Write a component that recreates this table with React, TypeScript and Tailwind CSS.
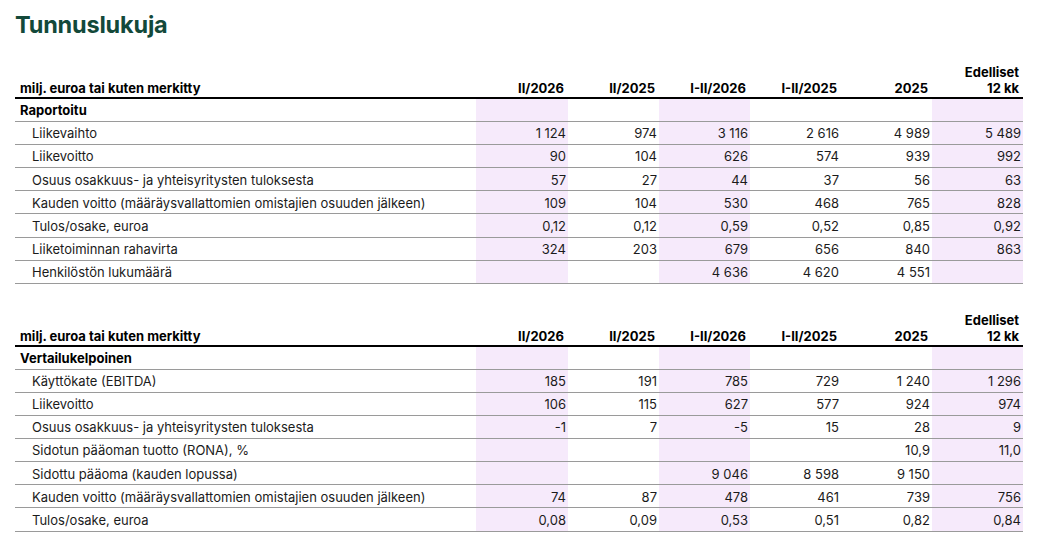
import React from "react";

type Row = { label: string; values: string[]; section?: boolean };

const cols = ["II/2026", "II/2025", "I-II/2026", "I-II/2025", "2025"];

const table1: Row[] = [
  { label: "Raportoitu", values: ["", "", "", "", "", ""], section: true },
  { label: "Liikevaihto", values: ["1 124", "974", "3 116", "2 616", "4 989", "5 489"] },
  { label: "Liikevoitto", values: ["90", "104", "626", "574", "939", "992"] },
  { label: "Osuus osakkuus- ja yhteisyritysten tuloksesta", values: ["57", "27", "44", "37", "56", "63"] },
  { label: "Kauden voitto (määräysvallattomien omistajien osuuden jälkeen)", values: ["109", "104", "530", "468", "765", "828"] },
  { label: "Tulos/osake, euroa", values: ["0,12", "0,12", "0,59", "0,52", "0,85", "0,92"] },
  { label: "Liiketoiminnan rahavirta", values: ["324", "203", "679", "656", "840", "863"] },
  { label: "Henkilöstön lukumäärä", values: ["", "", "4 636", "4 620", "4 551", ""] },
];

const table2: Row[] = [
  { label: "Vertailukelpoinen", values: ["", "", "", "", "", ""], section: true },
  { label: "Käyttökate (EBITDA)", values: ["185", "191", "785", "729", "1 240", "1 296"] },
  { label: "Liikevoitto", values: ["106", "115", "627", "577", "924", "974"] },
  { label: "Osuus osakkuus- ja yhteisyritysten tuloksesta", values: ["-1", "7", "-5", "15", "28", "9"] },
  { label: "Sidotun pääoman tuotto (RONA), %", values: ["", "", "", "", "10,9", "11,0"] },
  { label: "Sidottu pääoma (kauden lopussa)", values: ["", "", "9 046", "8 598", "9 150", ""] },
  { label: "Kauden voitto (määräysvallattomien omistajien osuuden jälkeen)", values: ["74", "87", "478", "461", "739", "756"] },
  { label: "Tulos/osake, euroa", values: ["0,08", "0,09", "0,53", "0,51", "0,82", "0,84"] },
];

const shaded = [true, false, true, false, false, true];

function Table({ rows, className }: { rows: Row[]; className: string }) {
  return (
    <div className={className}>
      <div className="grid grid-cols-[461px_92px_91px_91px_91px_91px_91px] h-[37px] border-b-2 border-black items-end font-bold text-[13px] leading-[16px] text-black">
        <div className="pl-[5px] pb-[1px]">milj. euroa tai kuten merkitty</div>
        {cols.map((c) => (
          <div key={c} className="text-right pr-[4px] pb-[1px]">
            {c}
          </div>
        ))}
        <div className="text-right pr-[4px] pb-[1px]">
          Edelliset
          <br />
          12 kk
        </div>
      </div>
      {rows.map((r, i) => (
        <div
          key={i}
          className="grid grid-cols-[461px_92px_91px_91px_91px_91px_91px] h-[23.1px] border-b border-[#9a9a9a] text-[13px] text-[#1b1b1b]"
        >
          <div
            className={
              r.section
                ? "pl-[5px] pt-[2px] flex items-center font-bold text-black"
                : "pl-[17px] pt-[2px] flex items-center"
            }
          >
            {r.label}
          </div>
          {r.values.map((v, j) => (
            <div
              key={j}
              className={
                shaded[j]
                  ? "bg-[#f6eafb] flex items-center justify-end pr-[2px] pt-[2px]"
                  : "flex items-center justify-end pr-[2px] pt-[2px]"
              }
            >
              {v}
            </div>
          ))}
        </div>
      ))}
    </div>
  );
}

export default function App() {
  return (
    <div
      className="w-[1041px] h-[552px] bg-white pl-[15px] pt-[9px] overflow-hidden"
      style={{ fontFamily: "Inter, 'Noto Sans', sans-serif" }}
    >
      <h1 className="text-[23.5px] leading-[32px] font-bold text-[#13493a] tracking-[-0.2px]">Tunnuslukuja</h1>
      <Table rows={table1} className="mt-[21px] w-[1008px]" />
      <Table rows={table2} className="mt-[26px] w-[1008px]" />
    </div>
  );
}
